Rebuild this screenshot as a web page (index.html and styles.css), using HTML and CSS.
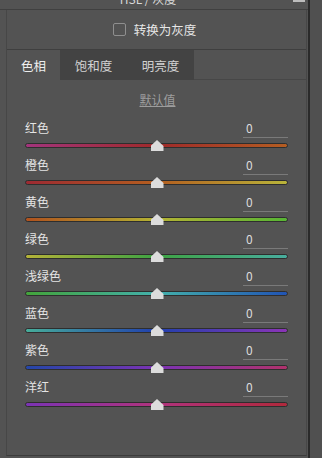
FILE: index.html
```html
<!DOCTYPE html>
<html lang="zh-CN">
<head>
  <meta charset="UTF-8">
  <title>HSL / 灰度</title>
  <link rel="stylesheet" href="styles.css">
</head>
<body>
  <div class="panel">
    <div class="title">
      <span class="title-text">HSL / 灰度</span>
      <span class="menu-icon"></span>
    </div>
    <div class="frame">
      <label class="grayscale">
        <span class="checkbox"></span>
        <span>转换为灰度</span>
      </label>
      <div class="tabs">
        <div class="tab active">色相</div>
        <div class="tab">饱和度</div>
        <div class="tab">明亮度</div>
        <div class="tab-fill"></div>
      </div>
      <div class="content">
        <div class="defaults"><span>默认值</span></div>

        <div class="row">
          <div class="row-head"><span class="label">红色</span><span class="value">0</span></div>
          <div class="track red"><span class="thumb"></span></div>
        </div>
        <div class="row">
          <div class="row-head"><span class="label">橙色</span><span class="value">0</span></div>
          <div class="track orange"><span class="thumb"></span></div>
        </div>
        <div class="row">
          <div class="row-head"><span class="label">黄色</span><span class="value">0</span></div>
          <div class="track yellow"><span class="thumb"></span></div>
        </div>
        <div class="row">
          <div class="row-head"><span class="label">绿色</span><span class="value">0</span></div>
          <div class="track green"><span class="thumb"></span></div>
        </div>
        <div class="row">
          <div class="row-head"><span class="label">浅绿色</span><span class="value">0</span></div>
          <div class="track aqua"><span class="thumb"></span></div>
        </div>
        <div class="row">
          <div class="row-head"><span class="label">蓝色</span><span class="value">0</span></div>
          <div class="track blue"><span class="thumb"></span></div>
        </div>
        <div class="row">
          <div class="row-head"><span class="label">紫色</span><span class="value">0</span></div>
          <div class="track purple"><span class="thumb"></span></div>
        </div>
        <div class="row">
          <div class="row-head"><span class="label">洋红</span><span class="value">0</span></div>
          <div class="track magenta"><span class="thumb"></span></div>
        </div>
      </div>
    </div>
  </div>
  <div class="divider"></div>
  <div class="side"></div>
</body>
</html>
```

FILE: styles.css
```css
/* Photoshop-like HSL panel */
html, body {
  margin: 0;
  padding: 0;
}
body {
  width: 322px;
  height: 458px;
  overflow: hidden;
  display: flex;
  background-color: #535353;
  font-family: "Noto Sans CJK SC", "DejaVu Sans", sans-serif;
  font-size: 12px;
  color: #dedede;
}
.panel {
  width: 308px;
  display: flex;
  flex-direction: column;
}
.divider {
  width: 2px;
  background-color: #2a2a2a;
}
.side {
  flex: 1;
  background-color: #505050;
}

/* title bar, cut by the top of the shot */
.title {
  position: relative;
  height: 9px;
  overflow: hidden;
  border-bottom: 1px solid #404040;
  text-align: center;
}
.title-text {
  display: block;
  margin-top: -10px;
  margin-left: -12px;
  line-height: 18px;
  font-size: 12px;
  color: #d8d8d8;
}
.menu-icon {
  position: absolute;
  top: 0;
  right: 3px;
  width: 12px;
  height: 2px;
  background-color: #bdbdbd;
}

.frame {
  flex: 1;
  margin: 0 1px 2px 6px;
  border-left: 1px solid #474747;
  border-right: 1px solid #474747;
  border-bottom: 1px solid #3c3c3c;
  display: flex;
  flex-direction: column;
}
.grayscale {
  height: 39px;
  display: flex;
  align-items: center;
  justify-content: center;
  gap: 8px;
  font-size: 12.5px;
  color: #e6e6e6;
  padding-right: 4px;
}
.checkbox {
  width: 11px;
  height: 11px;
  border: 1px solid #8f8f8f;
  border-radius: 2px;
}

/* tabs */
.tabs {
  height: 30px;
  display: flex;
  border-top: 1px solid #3f3f3f;
}
.tab {
  display: flex;
  align-items: center;
  justify-content: center;
  width: 67px;
  background-color: #434343;
  color: #d2d2d2;
  font-size: 12.5px;
}
.tab.active {
  width: 53px;
  background-color: #535353;
  color: #eeeeee;
}
.tab-fill {
  flex: 1;
  border-bottom: 1px solid #474747;
}

.content {
  padding: 10px 18px 0 18px;
}
.defaults {
  height: 20px;
  line-height: 20px;
  margin-bottom: 9px;
  text-align: center;
  margin-left: 2px;
}
.defaults span {
  color: #9d9d9d;
  text-decoration: underline;
  font-size: 12px;
}

.row {
  height: 37px;
}
.row-head {
  display: flex;
  justify-content: space-between;
  height: 18px;
  line-height: 18px;
}
.label {
  color: #e4e4e4;
}
.value {
  width: 45px;
  padding-left: 3px;
  border-bottom: 1px solid #7a7a7a;
  color: #dcdcdc;
  box-sizing: border-box;
  height: 19px;
}
.track {
  position: relative;
  margin-top: 6px;
  height: 3px;
  border: 1px solid #2e2e2e;
  border-radius: 3px;
}
.thumb {
  position: absolute;
  left: 50%;
  top: -4px;
  width: 13px;
  height: 11px;
  margin-left: -6px;
  background-color: #dcdcdc;
  clip-path: polygon(0 100%, 0 55%, 50% 0, 100% 55%, 100% 100%);
}
.track.red { background: linear-gradient(to right, #a3347c, #9f2a2a 50%, #b45d22); }
.track.orange { background: linear-gradient(to right, #9c2a32, #b35e20 50%, #b9b43a); }
.track.yellow { background: linear-gradient(to right, #b0521e, #b4b233 50%, #57b534); }
.track.green { background: linear-gradient(to right, #b4b238, #3ea343 50%, #48ad9e); }
.track.aqua { background: linear-gradient(to right, #43a33a, #43b0ab 50%, #2154b4); }
.track.blue { background: linear-gradient(to right, #46ad9a, #2140ad 50%, #8a34b6); }
.track.purple { background: linear-gradient(to right, #2446a8, #7b33b4 50%, #b0326c); }
.track.magenta { background: linear-gradient(to right, #7b33b4, #b0337d 50%, #b0293c); }
```
